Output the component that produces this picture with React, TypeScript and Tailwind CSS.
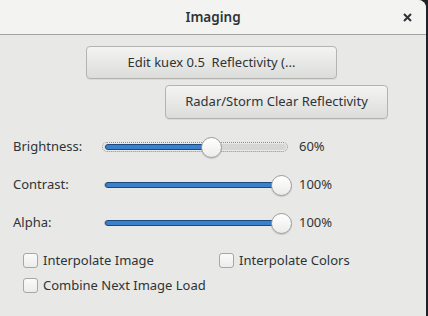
import React from "react";

const sliders = [
  { label: "Brightness:", value: 0.6, text: "60%", focused: true },
  { label: "Contrast:", value: 1, text: "100%", focused: false },
  { label: "Alpha:", value: 1, text: "100%", focused: false },
];

function Slider({ value, focused }: { value: number; focused: boolean }) {
  const knob = 2 + value * 175;
  return (
    <div className="relative h-[22px] w-[182px]">
      <div
        className={`absolute left-0 right-0 top-[8px] h-[6px] rounded-full bg-[#d6d6d4] ${
          focused ? "outline outline-1 outline-dotted outline-[#8e8e8c] outline-offset-1" : "border border-[#b4b4b0]"
        }`}
      />
      <div
        className="absolute left-[1px] top-[8px] h-[6px] rounded-full border border-[#1c4a7c] bg-[#3a80cd]"
        style={{ width: knob }}
      />
      <div
        className="absolute top-[1px] h-[21px] w-[21px] rounded-full border border-[#9b9b98] bg-gradient-to-b from-[#ffffff] to-[#ececeb] shadow-[0_1px_1px_rgba(0,0,0,0.15)]"
        style={{ left: knob - 10 }}
      />
    </div>
  );
}

function Check({ label }: { label: string }) {
  return (
    <label className="flex items-center gap-[5px]">
      <span className="h-[15px] w-[15px] rounded-[3px] border border-[#a7a7a4] bg-gradient-to-b from-[#fbfbfb] to-[#ececec]" />
      <span>{label}</span>
    </label>
  );
}

export default function App() {
  return (
    <div className="h-[316px] w-[428px] bg-[#1e2127] font-['Noto_Sans',sans-serif] text-[13px] text-[#2e3436]">
      <div className="flex h-[316px] w-[426px] flex-col overflow-hidden rounded-tr-[8px] bg-[#e8e8e7]">
        {/* Title bar */}
        <div className="relative flex h-[35px] shrink-0 items-center justify-center border-b border-[#a3a3a0] bg-[#f3f3f2]">
          <span className="text-[13.5px] font-semibold">Imaging</span>
          <svg className="absolute right-[14px] top-[13px]" width="9" height="9" viewBox="0 0 9 9">
            <path d="M1 1 L8 8 M8 1 L1 8" stroke="#2e3436" strokeWidth="2" strokeLinecap="butt" />
          </svg>
        </div>

        {/* Buttons */}
        <div className="flex flex-col items-start pt-[11px]">
          <button className="ml-[86px] h-[33px] w-[251px] rounded-[4px] border border-[#b3b3b0] bg-gradient-to-b from-[#f4f4f3] to-[#dcdcda] shadow-[0_1px_0_rgba(0,0,0,0.06)]">
            Edit kuex 0.5&nbsp; Reflectivity (...
          </button>
          <button className="ml-[165px] mt-[6px] h-[34px] w-[223px] rounded-[4px] border border-[#b3b3b0] bg-gradient-to-b from-[#f4f4f3] to-[#dcdcda] shadow-[0_1px_0_rgba(0,0,0,0.06)]">
            Radar/Storm Clear Reflectivity
          </button>
        </div>

        {/* Sliders */}
        <div className="mt-[17px] flex flex-col gap-[16px] pl-[13px]">
          {sliders.map((s) => (
            <div key={s.label} className="flex h-[22px] items-center">
              <span className="w-[91px]">{s.label}</span>
              <Slider value={s.value} focused={s.focused} />
              <span className="ml-[13px]">{s.text}</span>
            </div>
          ))}
        </div>

        {/* Checkboxes */}
        <div className="mt-[17px] grid grid-cols-[196px_auto] gap-y-[7px] pl-[23px] leading-[18px]">
          <Check label="Interpolate Image" />
          <Check label="Interpolate Colors" />
          <Check label="Combine Next Image Load" />
        </div>
      </div>
    </div>
  );
}
